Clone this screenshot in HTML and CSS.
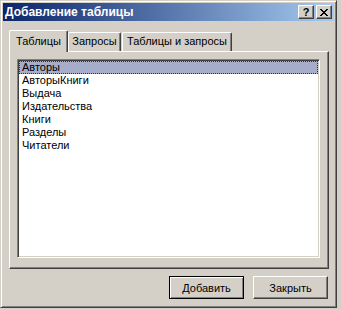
FILE: index.html
```html
<!DOCTYPE html>
<html lang="ru">
<head>
<meta charset="utf-8">
<title>Добавление таблицы</title>
<link rel="stylesheet" href="styles.css">
</head>
<body>
<div class="window">
  <div class="titlebar">
    <span class="title">Добавление таблицы</span>
    <div class="caps">
      <button class="cap help">?</button>
      <button class="cap close" aria-label="Закрыть">
        <svg width="8" height="7" viewBox="0 0 8 7" shape-rendering="crispEdges">
          <path fill="#000" d="M0 0h2v1H0zM6 0h2v1H6zM1 1h2v1H1zM5 1h2v1H5zM2 2h4v1H2zM3 3h2v1H3zM2 4h4v1H2zM1 5h2v1H1zM5 5h2v1H5zM0 6h2v1H0zM6 6h2v1H6z"/>
        </svg>
      </button>
    </div>
  </div>
  <div class="client">
    <div class="tabs">
      <div class="tab active">Таблицы</div>
      <div class="tab t2">Запросы</div>
      <div class="tab t3">Таблицы и запросы</div>
    </div>
    <div class="panel">
      <ul class="list">
        <li class="sel">Авторы</li>
        <li>АвторыКниги</li>
        <li>Выдача</li>
        <li>Издательства</li>
        <li>Книги</li>
        <li>Разделы</li>
        <li>Читатели</li>
      </ul>
    </div>
    <div class="actions">
      <button class="btn default">Добавить</button>
      <button class="btn">Закрыть</button>
    </div>
  </div>
</div>
</body>
</html>
```
FILE: styles.css
```css
* { box-sizing: border-box; }
html, body { margin: 0; }
body {
  background: #d4d0c8;
  font-family: "Liberation Sans", Arial, sans-serif;
  font-size: 11px;
  color: #000;
}
.window {
  width: 337px;
  height: 308px;
  background: #d4d0c8;
  border: 1px solid;
  border-color: #d4d0c8 #404040 #404040 #d4d0c8;
  box-shadow: inset 1px 1px #fff, inset -1px -1px #808080;
  padding: 2px;
  display: flex;
  flex-direction: column;
}
.titlebar {
  height: 18px;
  flex: none;
  background: linear-gradient(to right, #0a246a, #a6caf0);
  display: flex;
  align-items: center;
  justify-content: space-between;
  padding: 0 2px 0 2px;
}
.title {
  color: #fff;
  font-weight: bold;
  font-size: 12px;
  line-height: 18px;
  white-space: nowrap;
}
.caps { display: flex; gap: 2px; }
.cap {
  width: 16px;
  height: 14px;
  margin: 0;
  padding: 0;
  background: #d4d0c8;
  border: 1px solid;
  border-color: #fff #404040 #404040 #fff;
  box-shadow: inset -1px -1px #808080;
  display: flex;
  align-items: center;
  justify-content: center;
  font-family: "Liberation Sans", Arial, sans-serif;
  font-weight: bold;
  font-size: 11px;
  line-height: 12px;
  color: #000;
}
.cap svg { display: block; }
.client {
  flex: 1;
  padding: 9px 5px 0 6px;
  display: flex;
  flex-direction: column;
}
.tabs {
  height: 21px;
  display: flex;
  align-items: flex-end;
}
.tab {
  height: 19px;
  background: #d4d0c8;
  border: 1px solid;
  border-color: #fff #404040 transparent #fff;
  border-bottom: none;
  border-radius: 2px 2px 0 0;
  box-shadow: inset -1px 0 #808080;
  text-align: center;
  line-height: 17px;
  white-space: nowrap;
}
.tab.active {
  width: 59px;
  height: 22px;
  margin-bottom: -1px;
  position: relative;
  z-index: 1;
  line-height: 20px;
  padding-bottom: 2px;
}
.tab.t2 { width: 53px; }
.tab.t3 { width: 110px; margin-left: 1px; }
.panel {
  height: 218px;
  flex: none;
  border: 1px solid;
  border-color: #fff #404040 #404040 #fff;
  box-shadow: inset -1px -1px #808080;
  padding: 7px 8px 10px 7px;
}
.list {
  list-style: none;
  margin: 0;
  height: 199px;
  background: #fff;
  border: 1px solid;
  border-color: #808080 #fff #fff #808080;
  box-shadow: inset 1px 1px #404040, inset -1px -1px #d4d0c8;
  padding: 1px;
}
.list li {
  height: 13px;
  line-height: 13px;
  padding-left: 3px;
  white-space: nowrap;
}
.list li.sel {
  background: #a5adca;
  outline: 1px dotted #303030;
  outline-offset: -1px;
}
.actions {
  display: flex;
  justify-content: flex-end;
  gap: 9px;
  padding: 7px 1px 0 0;
}
.btn {
  width: 75px;
  height: 23px;
  margin: 0;
  padding: 0;
  background: #d4d0c8;
  font-family: "Liberation Sans", Arial, sans-serif;
  font-size: 11px;
  color: #000;
  border: 1px solid;
  border-color: #fff #404040 #404040 #fff;
  box-shadow: inset -1px -1px #808080;
}
.btn.default {
  border-color: #000;
  box-shadow: inset 1px 1px #fff, inset -1px -1px #808080;
}
```
